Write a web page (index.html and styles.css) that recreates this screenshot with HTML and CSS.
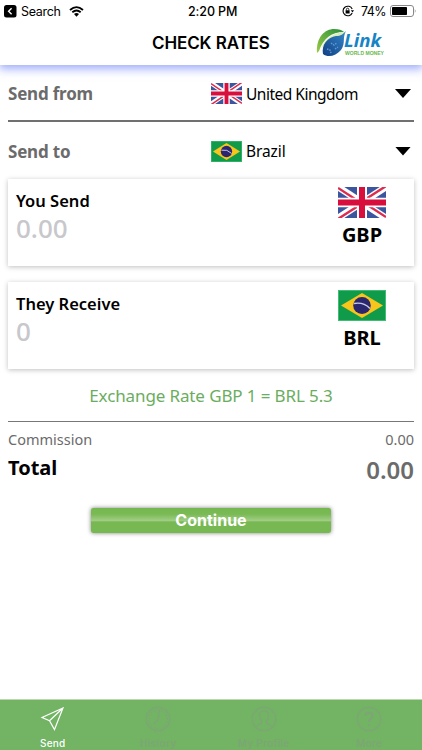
FILE: index.html
```
<!DOCTYPE html>
<html lang="en">
<head>
  <meta charset="UTF-8">
  <meta name="viewport" content="width=device-width, initial-scale=1">
  <title>Check Rates</title>
  <link rel="stylesheet" href="styles.css">
</head>
<body>
  <!-- shared flag artwork -->
  <svg class="defs" width="0" height="0">
    <symbol id="flag-gb" viewBox="0 0 48 32" preserveAspectRatio="none">
      <rect width="48" height="32" fill="#3c559f"/>
      <path d="M0 0L48 32M48 0L0 32" stroke="#fff" stroke-width="7"/>
      <path d="M0 1L24 17M48 -1L24 15M0 33L24 17M48 31L24 15" stroke="#dc2d50" stroke-width="2.4"/>
      <path d="M24 0V32M0 16H48" stroke="#fff" stroke-width="10"/>
      <path d="M24 0V32M0 16H48" stroke="#d80f3c" stroke-width="6"/>
    </symbol>
    <symbol id="flag-br" viewBox="0 0 48 32" preserveAspectRatio="none">
      <rect width="48" height="32" fill="#109b4b"/>
      <rect x=".5" y=".5" width="47" height="31" fill="none" stroke="#3fbd74"/>
      <path d="M24 3L45 16L24 29L3 16Z" fill="#f8c51c"/>
      <circle cx="24" cy="16" r="8.8" fill="#2b2670"/>
      <path d="M16 14Q25 12 32 19" fill="none" stroke="#c9cce0" stroke-width="1.5"/>
    </symbol>
  </svg>

  <header class="header">
    <div class="status">
      <div class="status-left">
        <svg width="13" height="13" viewBox="0 0 13 13"><rect width="12.5" height="12.5" rx="2.5"/><path d="M7.6 3.3L4.6 6.3L7.6 9.3" fill="none" stroke="#fff" stroke-width="1.4"/></svg>
        <span class="back">Search</span>
        <svg class="wifi" width="15" height="11" viewBox="0 0 15 11"><path d="M1 4Q7.5 -1.8 14 4M3.3 6.3Q7.5 2.6 11.7 6.3" fill="none" stroke="#000" stroke-width="1.8"/><path d="M5 8.1Q7.5 6 10 8.1L7.5 10.7Z"/></svg>
      </div>
      <span class="time">2:20 PM</span>
      <div class="status-right">
        <svg width="12" height="12" viewBox="0 0 12 12"><path d="M10.2 4A4.8 4.8 0 1 0 10.2 8" fill="none" stroke="#000" stroke-width="1.1"/><path d="M8.8 5.2H12L10.5 7.4Z"/><rect x="3.6" y="5.3" width="4" height="3.2"/><path d="M4.4 5.5V4.4a1.2 1.2 0 0 1 2.4 0V5.5" fill="none" stroke="#000" stroke-width=".8"/></svg>
        <span class="percent">74%</span>
        <svg width="27" height="12" viewBox="0 0 27 12"><rect x=".5" y=".5" width="23" height="11" rx="2.5" fill="none" stroke="#888"/><rect x="2" y="2" width="15" height="8" rx=".8"/><path d="M24.8 4Q26.5 6 24.8 8Z" fill="#888"/></svg>
      </div>
    </div>
    <div class="title-bar">
      <h1>CHECK RATES</h1>
      <svg class="logo" width="72" height="31" viewBox="0 0 72 31">
        <defs>
          <linearGradient id="leaf" x1="0" y1="1" x2="1" y2="0"><stop offset="0" stop-color="#9bcb45"/><stop offset="1" stop-color="#278f3b"/></linearGradient>
          <linearGradient id="drop" x1="0" y1="1" x2="1" y2="0"><stop offset="0" stop-color="#123f83"/><stop offset="1" stop-color="#3488cb"/></linearGradient>
        </defs>
        <path d="M1 25C0 9 9 1 18 1C23 1 26 2 28 4C15 4 7 11 3 23Z" fill="url(#leaf)"/>
        <path d="M5 21C9 10 17 5 29 4C28 9 27 12 25 14C18 9 10 14 5 21Z" fill="#d9efb8"/>
        <path d="M7 26C5 17 12 9 20 8C25 8 27 6 30 3C26 10 30 15 25 22C20 28 12 30 7 26Z" fill="url(#drop)"/>
        <path d="M11 21l3 1 1 3M15 15l3 2 3-2M19 21l3-2" fill="none" stroke="#5f9bd0" stroke-width="1.5" stroke-dasharray="1.5 1"/>
        <text class="logo-name" x="28" y="19" textLength="37" lengthAdjust="spacingAndGlyphs">Link</text>
        <text class="logo-sub" x="29" y="26.5" textLength="39" lengthAdjust="spacingAndGlyphs">WORLD MONEY</text>
      </svg>
    </div>
  </header>

  <main class="content">
    <div class="select-row first">
      <span class="label">Send from</span>
      <div class="country">
        <svg class="flag-small"><use href="#flag-gb"/></svg>
        <span class="uk">United Kingdom</span>
      </div>
      <span class="caret"></span>
    </div>
    <div class="select-row">
      <span class="label">Send to</span>
      <div class="country">
        <svg class="flag-small"><use href="#flag-br"/></svg>
        <span class="br">Brazil</span>
      </div>
      <span class="caret"></span>
    </div>

    <section class="card">
      <div>
        <h2>You Send</h2>
        <div class="amount">0.00</div>
      </div>
      <div class="currency">
        <svg class="flag-large"><use href="#flag-gb"/></svg>
        <span>GBP</span>
      </div>
    </section>
    <section class="card">
      <div>
        <h2>They Receive</h2>
        <div class="amount">0</div>
      </div>
      <div class="currency">
        <svg class="flag-large"><use href="#flag-br"/></svg>
        <span>BRL</span>
      </div>
    </section>

    <p class="rate">Exchange Rate GBP 1 = BRL 5.3</p>

    <div class="summary">
      <div class="commission"><span>Commission</span><span>0.00</span></div>
      <div class="total"><span class="total-label">Total</span><span class="total-value">0.00</span></div>
    </div>
    <button class="continue" type="button">Continue</button>
  </main>

  <nav class="tabs">
    <a class="tab active">
      <svg width="26" height="26" viewBox="0 0 26 26"><path d="M23 2L2 11.5L9.5 14.8L14.5 23.5ZM9.5 14.8L23 2"/></svg>
      <span>Send</span>
    </a>
    <a class="tab">
      <svg width="26" height="26" viewBox="0 0 26 26"><circle cx="13" cy="13" r="11.7"/><circle cx="13" cy="13" r="9.4" stroke-dasharray="1 2"/><path d="M14.5 5L12.7 14L8.5 18"/></svg>
      <span>History</span>
    </a>
    <a class="tab">
      <svg width="26" height="26" viewBox="0 0 26 26"><circle cx="13" cy="13" r="11.7"/><path d="M5 21.5Q6 19 10.5 17.5V15Q8 12 8.5 8.5Q9 5 13 5T17.5 8.5Q18 12 15.5 15V17.5Q20 19 21 21.5"/></svg>
      <span>My Profile</span>
    </a>
    <a class="tab">
      <svg width="26" height="26" viewBox="0 0 26 26"><circle cx="13" cy="13" r="11.7"/><path d="M9.5 10Q9.5 6.8 13 6.8T16.5 10C16.5 12.5 13 12.5 13 16M13 18V20" stroke-width="2"/></svg>
      <span>More</span>
    </a>
  </nav>
</body>
</html>
```
FILE: styles.css
```
*, *::before, *::after { box-sizing: border-box; }

body {
  margin: 0;
  height: 750px;
  display: flex;
  flex-direction: column;
  overflow: hidden;
  background: #fff;
  color: #000;
  font-family: "Noto Sans", "Open Sans", sans-serif;
}
svg { display: block; }
.defs { position: absolute; }

/* status + title */
.header {
  height: 65px;
  flex: none;
  background: #fff;
  box-shadow: 0 3px 9px 1px rgba(80,105,245,.55);
  font-family: Inter, "Liberation Sans", sans-serif;
}
.status {
  height: 22px;
  padding: 0 5px 0 4px;
  display: grid;
  grid-template-columns: 184px auto 1fr;
  align-items: center;
  font-size: 12.5px;
}
.status-left, .status-right { display: flex; align-items: center; }
.status-right { justify-content: flex-end; }
.back { margin-left: 4px; letter-spacing: -.3px; }
.wifi { margin-left: 8px; }
.time { font-weight: 500; letter-spacing: -.1px; }
.percent { margin: 0 4px 0 7px; letter-spacing: -.6px; }
.title-bar {
  height: 43px;
  padding-right: 34px;
  display: grid;
  grid-template-columns: 152px 1fr auto;
  align-items: center;
}
.title-bar h1 {
  grid-column: 2;
  margin: 0;
  font-size: 17px;
  font-weight: 600;
  letter-spacing: -.1px;
  line-height: 43px;
}
.logo { overflow: visible; }
.logo-name { font: italic 700 18px "Open Sans", sans-serif; fill: #1684c5; }
.logo-sub { font: 700 5.5px "Liberation Sans", sans-serif; fill: #68b84a; }

.content { flex: 1; padding: 0 8px; }

/* country pickers */
.select-row {
  height: 57px;
  padding: 1px 3px 0 0;
  display: grid;
  grid-template-columns: 203px 1fr 16px;
  align-items: center;
}
.select-row.first { border-bottom: 2px solid #707070; padding-top: 2px; }
.label { color: #6b6b6b; font-size: 17px; font-weight: 700; letter-spacing: -.2px; }
.country { display: flex; align-items: center; gap: 4px; font-size: 15.5px; white-space: nowrap; }
.uk { letter-spacing: -.5px; }
.br { letter-spacing: -.1px; }
.flag-small { width: 31px; height: 21px; }
.caret { width: 16px; height: 9px; background: #000; clip-path: polygon(0 0, 100% 0, 50% 100%); }

/* amounts */
.card {
  height: 87px;
  padding: 8px 8px 0;
  margin-bottom: 16px;
  display: flex;
  justify-content: space-between;
  background: #fff;
  box-shadow: 0 1px 5px rgba(0,0,0,.25);
}
.card h2 { margin: 1px 0 0; font-size: 16.5px; line-height: 26px; font-weight: 600; }
.amount { color: #c7c7cc; font-size: 26px; line-height: 28px; font-weight: 500; }
.currency { width: 88px; display: flex; flex-direction: column; align-items: center; font-size: 20px; font-weight: 700; }
.currency span { line-height: 33px; }
.flag-large { width: 48px; height: 31px; }

.rate { margin: 0; text-align: center; color: #6aad5e; font-size: 17px; line-height: 22px; letter-spacing: -.12px; }

.summary { margin-top: 14px; border-top: 1px solid #777; color: #6b6b6b; }
.commission, .total { display: flex; justify-content: space-between; }
.commission { padding-top: 6px; font-size: 14.5px; line-height: 23px; }
.total { line-height: 34px; }
.total-label { color: #000; font-size: 20px; font-weight: 700; line-height: 33px; }
.total-value { font-size: 24px; font-weight: 600; line-height: 38px; }

.continue {
  display: block;
  width: 240px;
  height: 25px;
  margin: 19px auto 0 83px;
  padding: 0;
  border: 0;
  border-radius: 2px;
  background: linear-gradient(#74b74f 0%, #7bba56 25%, #a0cd84 50%, #78b852 56%, #78b852 100%);
  box-shadow: 0 0 4px rgba(0,0,0,.5);
  color: #fff;
  font: 700 16px/25px Inter, "Liberation Sans", sans-serif;
}

/* bottom navigation */
.tabs {
  height: 51px;
  flex: none;
  display: grid;
  grid-template-columns: repeat(4, 1fr);
  border-top: 1px solid #b9d8b0;
  background: #72b364;
  font: 500 10px/12px Inter, "Liberation Sans", sans-serif;
}
.tab { display: flex; flex-direction: column; align-items: center; padding-top: 6px; color: #7fa477; }
.tab svg { fill: none; stroke: currentColor; stroke-width: 1.2; }
.tab span { margin-top: 5px; letter-spacing: .3px; }
.tab.active { color: #fff; }
```
